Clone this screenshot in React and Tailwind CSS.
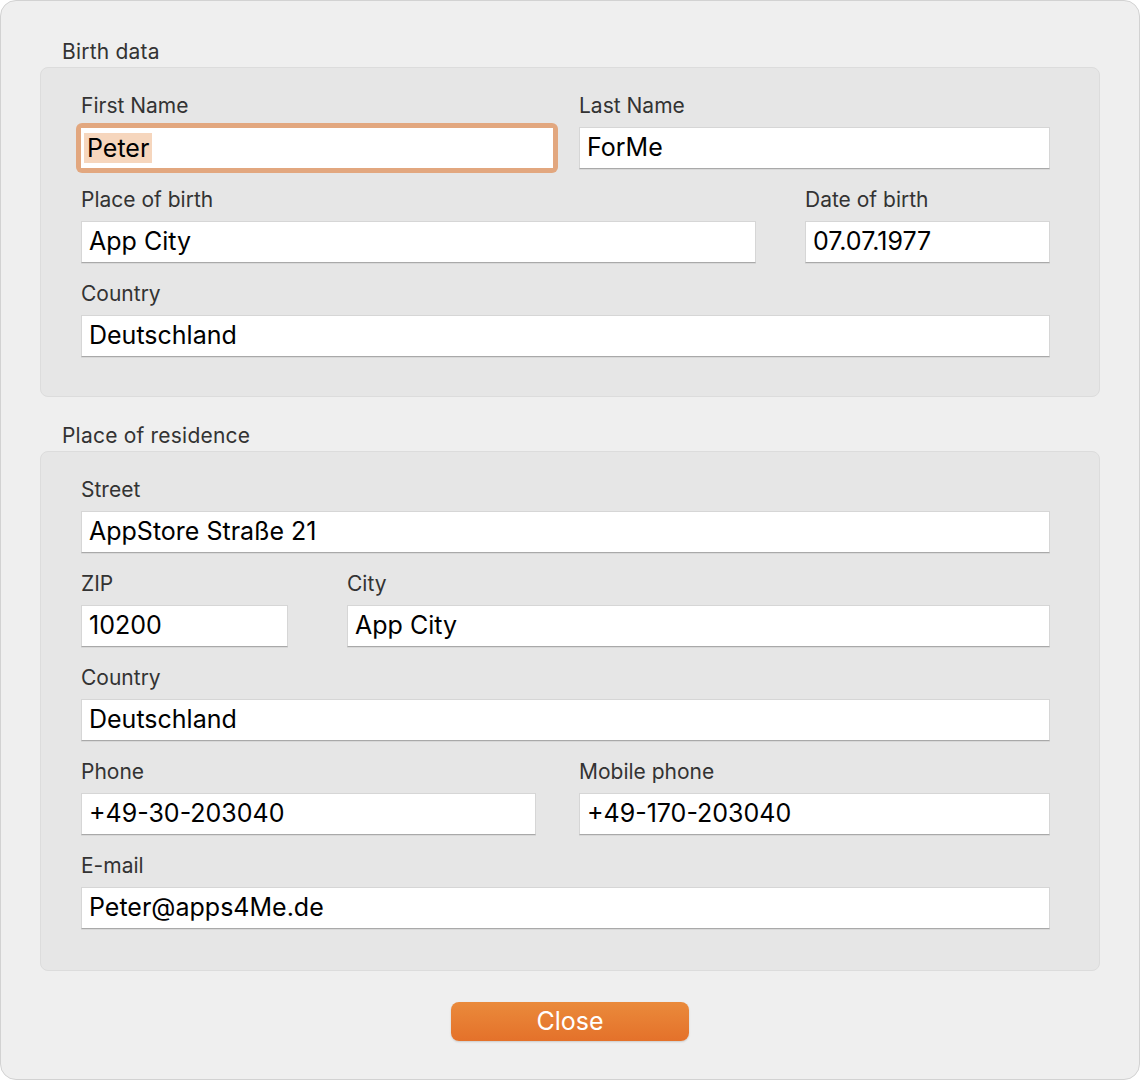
const font = { fontFamily: "Inter, 'Noto Sans', sans-serif" };

function Field({ label, value, width, focused }) {
  return (
    <div className="flex flex-col" style={width ? { width } : { flex: 1 }}>
      <div className="text-[21px] leading-[22px] text-[#333]">{label}</div>
      {focused ? (
        <div className="mt-[6px] mb-[-4px] -mx-[5px] rounded-[6px] bg-[#e2a77f] p-[5px]">
          <div className="h-[40px] bg-white flex items-center pl-[3px] text-[25px] text-black">
            <span className="bg-[#f6d6bd] px-[3px] leading-[30px]">{value}</span>
          </div>
        </div>
      ) : (
        <div className="mt-[10px] h-[42px] bg-white border border-[#d6d6d6] border-b-[#a9a9a9] flex items-center px-[7px] text-[25px] text-black shadow-[0_1px_0_rgba(0,0,0,0.06)]">
          {value}
        </div>
      )}
    </div>
  );
}

function Group({ title, bottom, children }) {
  return (
    <section>
      <div className="pl-[22px] text-[21px] leading-[22px] tracking-[0.01em] text-[#333] mb-[4px]">{title}</div>
      <div
        className={`rounded-[8px] border border-[#dcdcdc] bg-[#e6e6e6] pt-[27px] pl-[40px] pr-[49px] flex flex-col gap-[20px] ${
          bottom ? "pb-[41px]" : "pb-[39px]"
        }`}
      >
        {children}
      </div>
    </section>
  );
}

export default function App() {
  return (
    <div style={font} className="w-[1140px] h-[1080px] bg-white">
      <div className="w-[1140px] h-[1080px] rounded-[16px] border border-[#d2d2d2] bg-[#efefef] pt-[40px] px-[39px] flex flex-col">
        <Group title="Birth data">
          <div className="flex">
            <Field label="First Name" value="Peter" width={472} focused />
            <div className="w-[26px]" />
            <Field label="Last Name" value="ForMe" />
          </div>
          <div className="flex">
            <Field label="Place of birth" value="App City" width={675} />
            <div className="w-[49px]" />
            <Field label="Date of birth" value="07.07.1977" />
          </div>
          <Field label="Country" value="Deutschland" />
        </Group>

        <div className="h-[28px]" />

        <Group title="Place of residence" bottom>
          <Field label="Street" value="AppStore Straße 21" />
          <div className="flex">
            <Field label="ZIP" value="10200" width={207} />
            <div className="w-[59px]" />
            <Field label="City" value="App City" />
          </div>
          <Field label="Country" value="Deutschland" />
          <div className="flex">
            <Field label="Phone" value="+49-30-203040" width={455} />
            <div className="w-[43px]" />
            <Field label="Mobile phone" value="+49-170-203040" />
          </div>
          <Field label="E-mail" value="Peter@apps4Me.de" />
        </Group>

        <div className="flex justify-center mt-[31px]">
          <button className="w-[238px] h-[39px] rounded-[8px] bg-gradient-to-b from-[#ea8a3b] to-[#e4712a] text-white text-[25px] leading-none shadow-[0_1px_2px_rgba(0,0,0,0.15)]">
            Close
          </button>
        </div>
      </div>
    </div>
  );
}
